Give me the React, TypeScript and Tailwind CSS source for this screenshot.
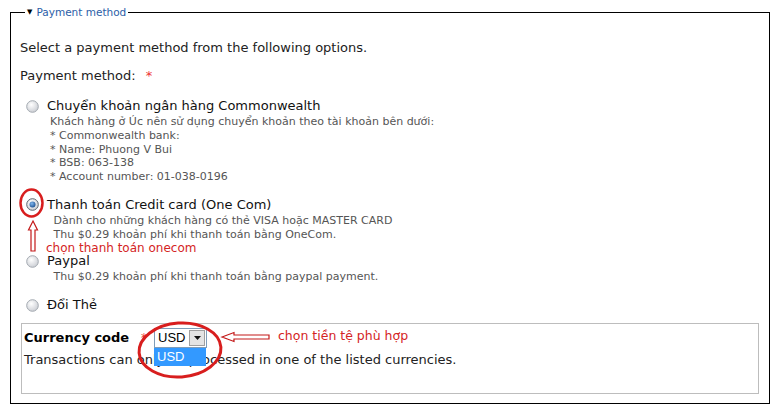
import React from "react";

type Option = {
  label: string;
  lines: string[];
  checked?: boolean;
  gap: string;
};

const options: Option[] = [
  {
    label: "Chuyển khoản ngân hàng Commonwealth",
    lines: [
      "Khách hàng ở Úc nên sử dụng chuyển khoản theo tài khoản bên dưới:",
      "* Commonwealth bank:",
      "* Name: Phuong V Bui",
      "* BSB: 063-138",
      "* Account number: 01-038-0196",
    ],
    gap: "mt-[11px]",
  },
  {
    label: "Thanh toán Credit card (One Com)",
    lines: [
      "\u00a0Dành cho những khách hàng có thẻ VISA hoặc MASTER CARD",
      "\u00a0Thu $0.29 khoản phí khi thanh toán bằng OneCom.",
    ],
    checked: true,
    gap: "mt-[12px]",
  },
  {
    label: "Paypal",
    lines: ["\u00a0Thu $0.29 khoản phí khi thanh toán bằng paypal payment."],
    gap: "mt-[11px]",
  },
  { label: "Đổi Thẻ", lines: [], gap: "mt-[12px]" },
];

function Radio({ checked }: { checked?: boolean }) {
  return (
    <svg width="13" height="13" viewBox="0 0 13 13" className="shrink-0">
      <defs>
        <radialGradient id="rbg" cx="0.4" cy="0.35" r="0.7">
          <stop offset="0" stopColor="#ffffff" />
          <stop offset="1" stopColor="#c9ccd2" />
        </radialGradient>
        <radialGradient id="rdot" cx="0.4" cy="0.35" r="0.7">
          <stop offset="0" stopColor="#7fb6ee" />
          <stop offset="1" stopColor="#1c4f8f" />
        </radialGradient>
      </defs>
      <circle cx="6.5" cy="6.5" r="5.8" fill="url(#rbg)" stroke={checked ? "#5d6770" : "#a3a9b0"} strokeWidth="1" />
      {checked && <circle cx="6.5" cy="6.5" r="3" fill="url(#rdot)" />}
    </svg>
  );
}

function PaymentOption({ option }: { option: Option }) {
  return (
    <div className={option.gap}>
      <div className="flex items-center h-[18px] pl-[6px] gap-[8px]">
        <Radio checked={option.checked} />
        <span className="text-[13px] leading-[18px] text-[#111]">{option.label}</span>
      </div>
      {option.lines.length > 0 && (
        <div className="pl-[30px] text-[11px] leading-[13.75px] text-[#555] whitespace-pre">
          {option.lines.map((l) => (
            <div key={l}>{l}</div>
          ))}
        </div>
      )}
    </div>
  );
}

export default function App() {
  return (
    <div
      className="relative w-[780px] h-[412px] bg-white overflow-hidden pt-[5px] pl-[10px]"
      style={{ fontFamily: '"DejaVu Sans", Verdana, sans-serif' }}
    >
      <fieldset className="w-[760px] h-[399px] border border-black pl-[9px] pr-[10px] pb-[10px]">
        <legend className="ml-[5px] px-[2px] h-[14px] flex items-center gap-[4px] text-[10.5px] leading-[14px] text-[#2b5ea7]">
          <span className="text-[7px] text-black">▼</span>
          <span>Payment method</span>
        </legend>

        <p className="mt-[19px] text-[13px] leading-[20px] text-[#222]">
          Select a payment method from the following options.
        </p>
        <p className="mt-[8px] text-[13px] leading-[20px] text-[#222]">
          Payment method: <span className="ml-[6px] text-[#e33]">*</span>
        </p>

        {options.map((o) => (
          <PaymentOption key={o.label} option={o} />
        ))}

        <div className="mt-[9px] ml-[1px] w-[738px] h-[71px] border border-[#bdbdbd] pl-[2px] pt-[3px]">
          <div className="flex items-center h-[21px]">
            <span className="text-[13px] font-bold text-black w-[117px]">Currency code</span>
            <span className="text-[12px] text-[#e33] w-[13px]">*</span>
            <div className="relative">
              <div className="flex items-center w-[53px] h-[20px] border border-[#7f9db9] bg-white">
                <span
                  className="flex-1 pl-[3px] text-[13px] text-black leading-[18px]"
                  style={{ fontFamily: '"Liberation Sans", Arial, sans-serif' }}
                >
                  USD
                </span>
                <span className="w-[16px] h-[16px] mr-[1px] bg-[#e4e4e4] border border-[#a0a0a0] flex items-center justify-center">
                  <svg width="7" height="4" viewBox="0 0 7 4">
                    <path d="M0 0h7L3.5 4z" fill="#111" />
                  </svg>
                </span>
              </div>
              <div
                className="absolute left-0 top-[20px] w-[52px] h-[18px] bg-[#3399ff] text-white text-[13px] leading-[18px] pl-[3px]"
                style={{ fontFamily: '"Liberation Sans", Arial, sans-serif' }}
              >
                USD
              </div>
            </div>
          </div>
          <p className="mt-[3px] text-[13px] leading-[18px] text-[#222]">
            Transactions can only be processed in one of the listed currencies.
          </p>
        </div>
      </fieldset>

      {/* annotations */}
      <svg className="absolute left-0 top-0 pointer-events-none" width="780" height="412">
        <ellipse cx="31.5" cy="203" rx="11" ry="13.5" fill="none" stroke="#d81e1e" strokeWidth="2.5" />
        <path
          d="M33 221 L37.5 230 L35 230 L35 251 L31 251 L31 230 L28.5 230 Z"
          fill="white"
          stroke="#c41a1a"
          strokeWidth="1.2"
        />
        <ellipse
          cx="180"
          cy="350"
          rx="41"
          ry="27"
          transform="rotate(-4 180 350)"
          fill="none"
          stroke="#d81e1e"
          strokeWidth="3"
        />
        <path
          d="M222 337 L234 332.5 L234 335 L269 335 L269 339 L234 339 L234 341.5 Z"
          fill="white"
          stroke="#c41a1a"
          strokeWidth="1.2"
        />
      </svg>
      <span className="absolute left-[46px] top-[241px] text-[12px] leading-[14px] text-[#d42424]">
        chọn thanh toán onecom
      </span>
      <span className="absolute left-[278px] top-[329px] text-[12.5px] leading-[14px] text-[#d42424]">
        chọn tiền tệ phù hợp
      </span>
    </div>
  );
}
